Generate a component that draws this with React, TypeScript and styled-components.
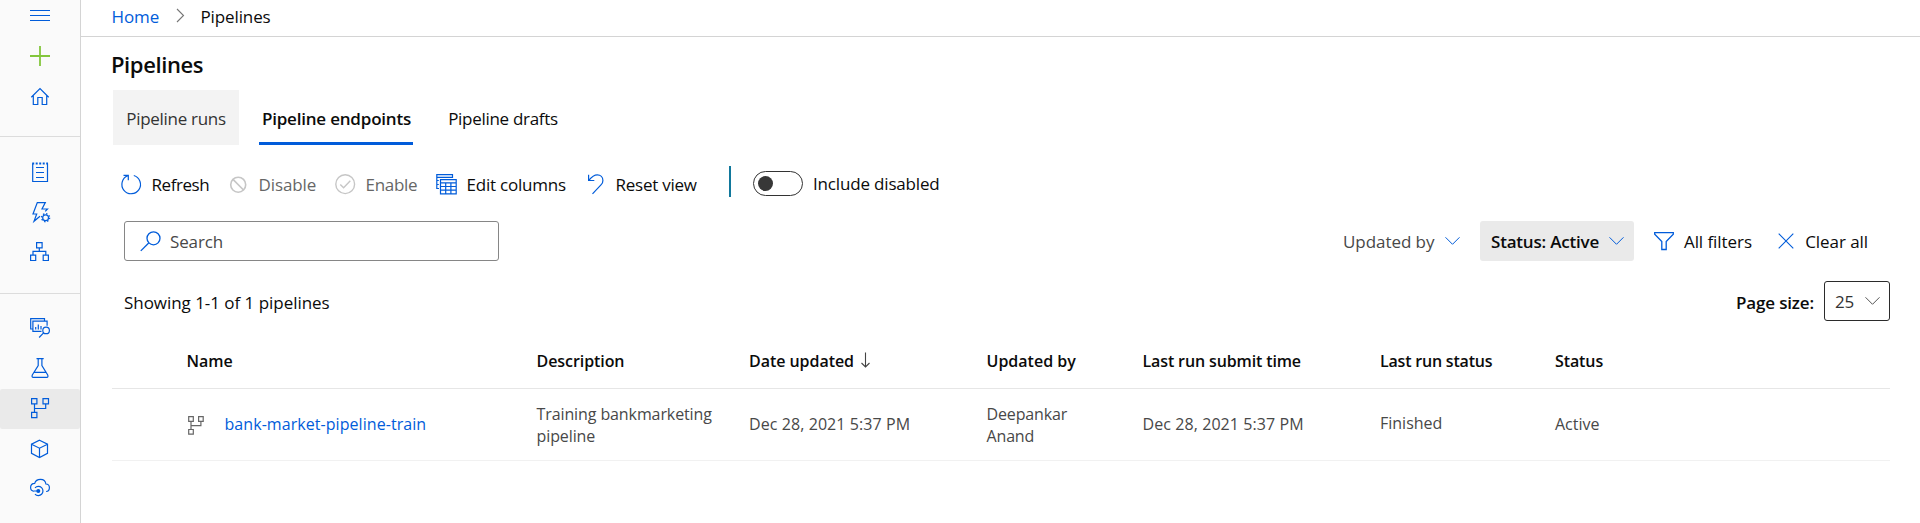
import React from 'react';
import styled, { createGlobalStyle } from 'styled-components';

const BLUE = '#015cda';

const GlobalStyle = createGlobalStyle`
  * { box-sizing: border-box; }
  body {
    margin: 0;
    background: #fff;
    color: #0b0b0b;
    font-family: "Open Sans", "Noto Sans", sans-serif;
    font-size: 17px;
    line-height: 22px;
    overflow: hidden;
  }
`;

const Page = styled.div`
  display: flex;
  height: 523px;
`;

/* ---------- Sidebar ---------- */

const Sidebar = styled.nav`
  flex: none;
  width: 81px;
  background: #fafafa;
  border-right: 1px solid #d4d4d4;
`;

const NavGroup = styled.div<{ $height: number; $top: number }>`
  display: flex;
  flex-direction: column;
  height: ${p => p.$height}px;
  padding-top: ${p => p.$top}px;
  border-bottom: 1px solid #dcdcdc;

  &:last-child {
    border-bottom: 0;
  }
`;

const NavItem = styled.a<{ $selected?: boolean; $height?: number }>`
  flex: none;
  display: flex;
  align-items: center;
  justify-content: center;
  height: ${p => p.$height ?? 40}px;
  border-radius: 2px;
  margin-top: ${p => (p.$selected ? 1 : 0)}px;
  background: ${p => (p.$selected ? '#eaeaea' : 'transparent')};
`;

const Glyph = styled.svg<{ $color?: string; $stroke?: number }>`
  flex: none;
  display: block;
  overflow: visible;
  fill: none;
  stroke: ${p => p.$color ?? BLUE};
  stroke-width: ${p => p.$stroke ?? 1.2};
`;

/* ---------- Header ---------- */

const Main = styled.main`
  flex: 1;
  min-width: 0;
`;

const Breadcrumb = styled.header`
  display: flex;
  align-items: center;
  height: 37px;
  padding: 0 0 3px 30.5px;
  border-bottom: 1px solid #d4d4d4;
`;

const Crumb = styled.a<{ $link?: boolean; $width?: number }>`
  width: ${p => (p.$width ? `${p.$width}px` : 'auto')};
  color: ${p => (p.$link ? BLUE : '#0b0b0b')};
  letter-spacing: ${p => (p.$link ? '-0.1px' : '-0.12px')};
`;

const CrumbChevron = styled.div`
  width: 24.5px;
  margin-top: -3px;
`;

const Title = styled.h1`
  margin: 0;
  height: 53px;
  padding-left: 30px;
  font-size: 22px;
  line-height: 54px;
  font-weight: 600;
  letter-spacing: -0.4px;
`;

const Tabs = styled.div`
  display: flex;
  height: 55px;
  padding-left: 32px;
`;

const Tab = styled.button<{ $width: number; $state?: 'hover' | 'active'; $spacing: number }>`
  width: ${p => p.$width}px;
  margin-right: 20px;
  padding: ${p => (p.$state === 'active' ? '6px 0 0 1px' : '3px 0 0')};
  border: 0;
  border-bottom: ${p => (p.$state === 'active' ? `3px solid ${BLUE}` : '0')};
  background: ${p => (p.$state === 'hover' ? '#f3f3f3' : 'transparent')};
  color: ${p => (p.$state === 'hover' ? '#333' : '#0b0b0b')};
  font: inherit;
  font-weight: ${p => (p.$state === 'active' ? 600 : 400)};
  letter-spacing: ${p => p.$spacing}px;
  white-space: nowrap;
`;

/* ---------- Toolbar ---------- */

const Toolbar = styled.div`
  display: flex;
  align-items: center;
  height: 40px;
  margin: 19px 0 17px;
  padding-left: 40px;
`;

const Label = styled.span`
  padding-top: 2px;
`;

const Command = styled.button<{ $width: number; $disabled?: boolean; $spacing: number }>`
  display: flex;
  align-items: center;
  gap: 9.5px;
  flex: none;
  width: ${p => p.$width}px;
  padding: 0;
  border: 0;
  background: none;
  color: ${p => (p.$disabled ? '#666' : '#0b0b0b')};
  font: inherit;
  letter-spacing: ${p => p.$spacing}px;
  white-space: nowrap;
`;

const Separator = styled.div`
  width: 2px;
  height: 31px;
  margin: -5px 22px 0 0;
  background: #11789c;
`;

const Toggle = styled.div`
  display: flex;
  align-items: center;
  width: 50px;
  height: 25px;
  margin: -1px 10px 0 0;
  padding-left: 4px;
  border: 1px solid #333;
  border-radius: 13px;
`;

const ToggleDot = styled.span`
  width: 15px;
  height: 15px;
  border-radius: 50%;
  background: #373737;
`;

const ToggleLabel = styled.span`
  letter-spacing: -0.17px;
`;

/* ---------- Filters ---------- */

const Row = styled.div`
  display: flex;
  align-items: center;
  height: 40px;
  padding: 0 30px 0 43px;
`;

const SearchBox = styled.div`
  display: flex;
  align-items: center;
  gap: 9px;
  width: 375px;
  height: 40px;
  margin-right: auto;
  padding-left: 15px;
  border: 1px solid #868686;
  border-radius: 3px;
  color: #484848;
  letter-spacing: -0.13px;
`;

const Filter = styled.button<{ $width: number; $selected?: boolean; $muted?: boolean }>`
  display: flex;
  align-items: center;
  justify-content: space-between;
  flex: none;
  width: ${p => p.$width}px;
  height: 40px;
  padding: ${p => (p.$selected ? '0 10px 0 11px' : '0')};
  border: 0;
  border-radius: 3px;
  background: ${p => (p.$selected ? '#eaeaea' : 'transparent')};
  color: ${p => (p.$muted ? '#484848' : '#0b0b0b')};
  font: inherit;
  font-weight: ${p => (p.$selected ? 600 : 400)};
  letter-spacing: ${p => (p.$selected ? '-0.2px' : '-0.06px')};
  white-space: nowrap;
`;

const Gap = styled.div<{ $width: number }>`
  flex: none;
  width: ${p => p.$width}px;
`;

const CountRow = styled(Row)`
  margin-top: 20px;
`;

const Count = styled.span`
  margin: 3px auto 0 0;
  letter-spacing: -0.04px;
`;

const PageSizeLabel = styled.span`
  margin: 3px 10px 0 0;
  font-weight: 600;
  letter-spacing: -0.15px;
`;

const PageSize = styled.div`
  display: flex;
  align-items: center;
  justify-content: space-between;
  width: 66px;
  height: 40px;
  padding: 0 9px 0 10px;
  border: 1px solid #2b2b2b;
  border-radius: 3px;
  color: #333;
  letter-spacing: -0.3px;
`;

/* ---------- Table ---------- */

const Table = styled.div`
  margin: 0 30px 0 31px;
  font-size: 16px;
`;

const TableRow = styled.div<{ $head?: boolean }>`
  display: grid;
  grid-template-columns: 350px 212.5px 237.5px 156px 237.5px 175px 1fr;
  align-items: center;
  height: ${p => (p.$head ? 68 : 72)}px;
  padding-left: 74.5px;
  padding-top: ${p => (p.$head ? 13 : 0)}px;
  border-bottom: 1px solid ${p => (p.$head ? '#e6e6e6' : '#f1f1f1')};
  color: ${p => (p.$head ? '#0b0b0b' : '#484848')};
  font-weight: ${p => (p.$head ? 600 : 400)};
`;

const Cell = styled.div<{ $spacing?: number; $lift?: number }>`
  display: flex;
  align-items: center;
  letter-spacing: ${p => p.$spacing ?? 0}px;
  padding-bottom: ${p => p.$lift ?? 0}px;
  white-space: pre;
`;

const RowIcon = styled.div`
  width: 38px;
  padding: 4px 0 0 1px;
`;

const PipelineLink = styled.a`
  color: ${BLUE};
  letter-spacing: 0.06px;
`;

const SortArrow = styled.div`
  margin: -3px 0 0 7px;
`;

/* ---------- Icons ---------- */

const navIcons: Record<string, React.ReactNode> = {
  menu: <path d="M0 5.5h20M0 10.5h20M0 15.5h20" strokeWidth="1" />,
  home: <path d="M1.3 10.2 10 1.6l8.7 8.6M3.3 8.8v8.7h4.5v-7h4.4v7h4.5V8.8" />,
  notepad: (
    <>
      <path d="M2.7 1.5v18h14.8v-18M6 5.5h8M6 10.5h8M6 15.5h8" />
      <path d="M2.2 1.5H18" strokeDasharray="2 1.5" strokeWidth="1.8" />
    </>
  ),
  automated: (
    <>
      <path d="M10 14.3 4 19.3 6.7 12H3L7.3.6h8L12 7h5.5l-2.3 2.4" />
      <circle cx="15.6" cy="15.7" r="2.9" />
      <circle cx="15.6" cy="15.7" r="4" strokeDasharray="1.4 1.74" strokeWidth="1.4" />
    </>
  ),
  designer: (
    <path d="M6.6.7h5.5v5.2H6.6zM9.3 5.9v3.4M3 13V9.300h12.8V13M.6 13.200h5.100v5.300H.6zM13.200 13.200h5.200v5.300h-5.200z" />
  ),
  datasets: (
    <>
      <path d="M3 11H.7V.7h13.800V3M11.500 13.300H2.900V3.200h14.200v4.600M5.700 9v2.400M8.300 6.500v4.900M11 8v3.400" />
      <circle cx="16.1" cy="12.4" r="3.3" />
      <path d="m13.6 14.8-4.5 4.7" />
    </>
  ),
  experiments: (
    <path d="M6.5.6h7.2M8.2.6v7L2.3 17q-.8 2.3 1 2.4h13.5q1.700-.1.900-2.400L11.900 7.600v-7M4.200 14.400h11.700" />
  ),
  pipelines: (
    <path d="M1.6-.4h5.300v5.200H1.600zM13-.4h5.500v5.200H13zM1.600 13.400h5.300v5.200H1.600zM4.500 4.800v8.600M4.500 9.500h11.200V4.800" />
  ),
  models: <path d="m9.5 1.2 8 4v9.200l-8 4.200-8-4.200V5.200zM1.500 5.200l8 4 8-4M9.500 9.200v9.400" />,
  endpoints: (
    <>
      <path d="M3.8 12.3C1.6 12 .6 10.500.6 8.600c0-2.400 1.600-4.100 4.100-4.200C5.400 1.800 7.800.4 10.500.4c2.800 0 5 1.800 5.400 4.600 2.200.1 3.500 1.800 3.500 3.700 0 2.100-1.300 3.700-3.300 3.800" />
      <path d="M5 8.800a4.600 4.600 0 1 1 0 6.300M3.800 12h4" />
      <circle cx="8.3" cy="12" r="2" fill={BLUE} stroke="none" />
    </>
  ),
};

function NavGlyph({ name }: { name: string }) {
  return (
    <Glyph width="20" height="20" viewBox="0 0 20 20">
      {navIcons[name]}
    </Glyph>
  );
}

const RefreshIcon = () => (
  <Glyph width="21" height="21" viewBox="0 0 21 21">
    <path d="M12.8 1.500A9.300 9.300 0 1 1 6.700 1.800M2.500 1.300h4.800v4.900" />
  </Glyph>
);

const DisableIcon = () => (
  <Glyph width="21" height="21" viewBox="0 0 21 21" $color="#c6c6c6" $stroke={1.6}>
    <circle cx="10.2" cy="10.7" r="7.5" />
    <path d="m5 5.4 10.5 10.6" />
  </Glyph>
);

const EnableIcon = () => (
  <Glyph width="21" height="21" viewBox="0 0 21 21" $color="#c6c6c6" $stroke={1.4}>
    <circle cx="10.2" cy="10.2" r="9.4" />
    <path d="m5.3 10.5 3.3 3.3 6.7-7" />
  </Glyph>
);

const ColumnsIcon = () => (
  <Glyph width="21" height="21" viewBox="0 0 21 21">
    <path d="M3 14.500H.8V.7h15.700v2.600H.8M.8 6.500h2M.8 10.500h2" />
    <path d="M4.500 5.700h15.700v14.100H4.500zM4.500 8.800h15.700M4.500 12.500h15.700M4.500 16.200h15.700M9.700 8.800v11M14.900 8.800v11" />
  </Glyph>
);

const ResetIcon = () => (
  <Glyph width="21" height="21" viewBox="0 0 21 21">
    <path d="M3.6.8v5.700h5.700M3.800 6.300C6.500 3 9.200.9 12.300.9c3.300 0 5.600 2.300 5.600 5.500 0 1.700-.6 3-1.700 4.200L7.500 19.800" />
  </Glyph>
);

const SearchIcon = () => (
  <Glyph width="21" height="21" viewBox="0 0 21 21" $stroke={1.3}>
    <circle cx="13.5" cy="7.3" r="6.5" />
    <path d="M8.7 12 .8 19.900" />
  </Glyph>
);

const ChevronDown = ({ color }: { color?: string }) => (
  <Glyph width="15" height="9" viewBox="0 0 15 9" $color={color} $stroke={1}>
    <path d="m.5.3 7 7 7-7" />
  </Glyph>
);

const FunnelIcon = () => (
  <Glyph width="20" height="20" viewBox="0 0 20 20" $stroke={1.3}>
    <path d="M.7 1.700h18.600v1.600L12.200 10.500v8H7.800v-8L.7 3.300z" />
  </Glyph>
);

const ClearIcon = () => (
  <Glyph width="16" height="16" viewBox="0 0 16 16" $stroke={1.1}>
    <path d="m.7.7 14.600 14.600M15.300.7.7 15.300" />
  </Glyph>
);

/* ---------- Page ---------- */

export default function App() {
  return (
    <Page>
      <GlobalStyle />
      <Sidebar>
        <NavGroup $height={137} $top={0}>
          <NavItem $height={30}><NavGlyph name="menu" /></NavItem>
          <NavItem $height={52}>
            <Glyph width="20" height="20" viewBox="0 0 20 20" $color="#83c63c" $stroke={1.8}>
              <path d="M10 0v20M0 10h20" />
            </Glyph>
          </NavItem>
          <NavItem $height={30}><NavGlyph name="home" /></NavItem>
        </NavGroup>
        <NavGroup $height={157} $top={15}>
          <NavItem><NavGlyph name="notepad" /></NavItem>
          <NavItem><NavGlyph name="automated" /></NavItem>
          <NavItem><NavGlyph name="designer" /></NavItem>
        </NavGroup>
        <NavGroup $height={229} $top={14}>
          <NavItem><NavGlyph name="datasets" /></NavItem>
          <NavItem><NavGlyph name="experiments" /></NavItem>
          <NavItem $selected><NavGlyph name="pipelines" /></NavItem>
          <NavItem><NavGlyph name="models" /></NavItem>
          <NavItem><NavGlyph name="endpoints" /></NavItem>
        </NavGroup>
      </Sidebar>

      <Main>
        <Breadcrumb>
          <Crumb $link $width={64.5}>Home</Crumb>
          <CrumbChevron>
            <Glyph width="9" height="15" viewBox="0 0 9 15" $color="#767676" $stroke={1.1}>
              <path d="m1 1 6.5 6.5L1 14" />
            </Glyph>
          </CrumbChevron>
          <Crumb>Pipelines</Crumb>
        </Breadcrumb>
        <Title>Pipelines</Title>
        <Tabs>
          <Tab $width={126} $state="hover" $spacing={-0.3}>Pipeline runs</Tab>
          <Tab $width={154} $state="active" $spacing={-0.2}>Pipeline endpoints</Tab>
          <Tab $width={140} $spacing={-0.3}>Pipeline drafts</Tab>
        </Tabs>

        <Toolbar>
          <Command $width={107} $spacing={-0.45}><RefreshIcon /><Label>Refresh</Label></Command>
          <Command $width={107} $spacing={-0.1} $disabled><DisableIcon /><Label>Disable</Label></Command>
          <Command $width={101} $spacing={-0.3} $disabled><EnableIcon /><Label>Enable</Label></Command>
          <Command $width={149} $spacing={-0.22}><ColumnsIcon /><Label>Edit columns</Label></Command>
          <Command $width={144} $spacing={-0.25}><ResetIcon /><Label>Reset view</Label></Command>
          <Separator />
          <Toggle><ToggleDot /></Toggle>
          <ToggleLabel>Include disabled</ToggleLabel>
        </Toolbar>

        <Row>
          <SearchBox><SearchIcon /><Label>Search</Label></SearchBox>
          <Filter $width={117} $muted><Label>Updated by</Label><ChevronDown /></Filter>
          <Gap $width={20} />
          <Filter $width={154} $selected><Label>Status: Active</Label><ChevronDown /></Filter>
          <Gap $width={20} />
          <Filter $width={98}><FunnelIcon /><Label>All filters</Label></Filter>
          <Gap $width={26} />
          <Filter $width={90}><ClearIcon /><Label>Clear all</Label></Filter>
          <Gap $width={22} />
        </Row>

        <CountRow>
          <Count>Showing 1-1 of 1 pipelines</Count>
          <PageSizeLabel>Page size:</PageSizeLabel>
          <PageSize><Label>25</Label><ChevronDown color="#555" /></PageSize>
        </CountRow>

        <Table>
          <TableRow $head>
            <Cell>Name</Cell>
            <Cell $spacing={-0.07}>Description</Cell>
            <Cell $spacing={-0.05}>
              Date updated
              <SortArrow>
                <Glyph width="9" height="16" viewBox="0 0 9 16" $color="#444" $stroke={1.1}>
                  <path d="M4.5.5v14.500M.5 11l4 4 4-4" />
                </Glyph>
              </SortArrow>
            </Cell>
            <Cell>Updated by</Cell>
            <Cell $spacing={-0.13}>Last run submit time</Cell>
            <Cell $spacing={-0.2}>Last run status</Cell>
            <Cell $spacing={-0.1}>Status</Cell>
          </TableRow>
          <TableRow>
            <Cell $lift={2}>
              <RowIcon>
                <Glyph width="16" height="19" viewBox="0 0 16 19" $color="#666" $stroke={1.2}>
                  <path d="M.7.7h4.600v4.600H.7zM10.600.7h4.600v4.600h-4.600zM.7 13.500h4.600v4.600H.7zM3 5.300v8.200M3 9.700h9.900V5.300" />
                </Glyph>
              </RowIcon>
              <PipelineLink>bank-market-pipeline-train</PipelineLink>
            </Cell>
            <Cell $spacing={-0.1}>{'Training bankmarketing\npipeline'}</Cell>
            <Cell $spacing={0.08} $lift={2}>Dec 28, 2021 5:37 PM</Cell>
            <Cell $spacing={-0.15}>{'Deepankar\nAnand'}</Cell>
            <Cell $spacing={0.08} $lift={2}>Dec 28, 2021 5:37 PM</Cell>
            <Cell $lift={4}>Finished</Cell>
            <Cell $lift={2}>Active</Cell>
          </TableRow>
        </Table>
      </Main>
    </Page>
  );
}
